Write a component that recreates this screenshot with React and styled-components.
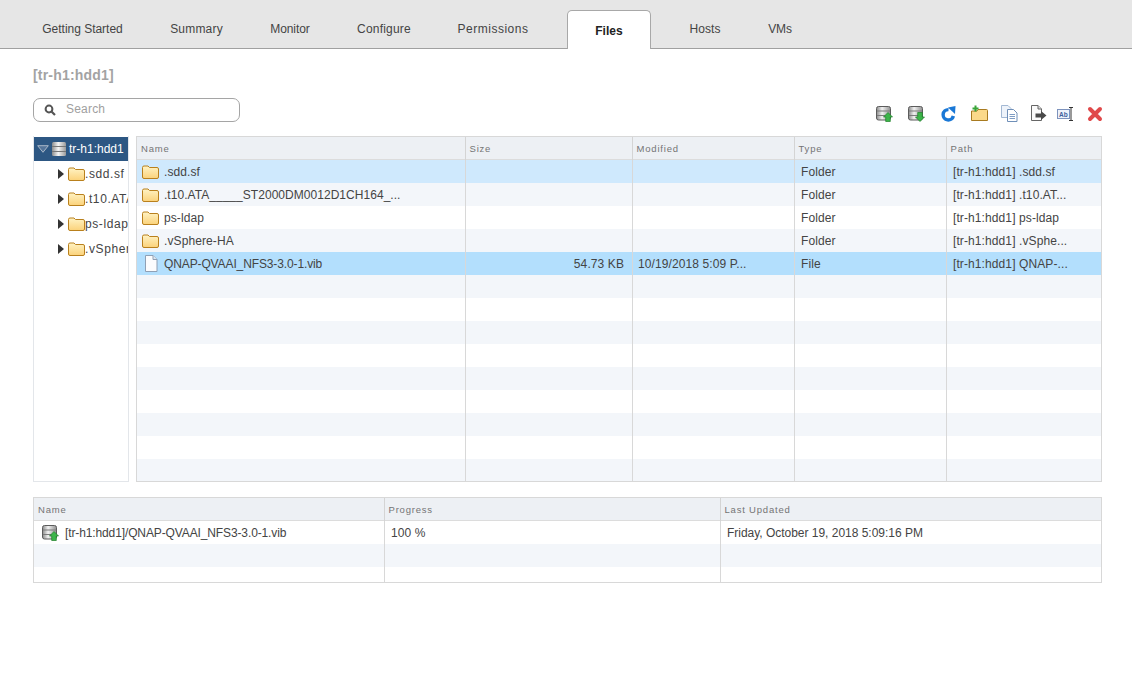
import styled, { createGlobalStyle } from 'styled-components'

const GlobalStyle = createGlobalStyle`
  html, body {
    margin: 0;
    padding: 0;
    background: #fff;
    font-family: 'Liberation Sans', Arial, sans-serif;
  }
`

const TabBar = styled.div`
  display: flex;
  align-items: flex-end;
  height: 48px;
  padding-left: 18.5px;
  background: #e6e6e6;
  border-bottom: 1px solid #a0a0a0;
`

const Tab = styled.div`
  box-sizing: border-box;
  flex: none;
  width: ${(p) => p.$w}px;
  height: 38px;
  padding-top: 12px;
  text-align: center;
  font-size: 12px;
  line-height: 14px;
  letter-spacing: ${(p) => p.$ls || 0.07}px;
  color: #444;
`

const ActiveTab = styled(Tab)`
  height: 39px;
  margin: 0 14.5px -1px 15.5px;
  padding-top: 13px;
  font-weight: bold;
  color: #222;
  background: #fff;
  border: 1px solid #a8a8a8;
  border-bottom: none;
  border-radius: 5px 5px 0 0;
`

const Content = styled.div`
  padding: 18px 30px 0 33px;
`

const Title = styled.h1`
  margin: 0;
  font-size: 14px;
  line-height: 17px;
  font-weight: bold;
  letter-spacing: 0.2px;
  color: #a3a3a3;
`

const Toolbar = styled.div`
  display: flex;
  justify-content: space-between;
  align-items: flex-start;
  height: 38px;
  margin-top: 14px;
`

const SearchBox = styled.div`
  box-sizing: border-box;
  display: flex;
  align-items: center;
  gap: 10px;
  width: 207px;
  height: 24px;
  padding: 0 0 2px 10px;
  border: 1px solid #a5a5a5;
  border-radius: 7px;
  font-size: 12px;
  letter-spacing: 0.2px;
  color: #a0a0a0;
`

const Actions = styled.div`
  display: flex;
  margin: 7px -1px 0 0;
`

const IconSlot = styled.span`
  display: block;
  width: 17px;
  height: 17px;
  flex: none;
  margin-left: ${(p) => p.$gap}px;
`

const Browser = styled.div`
  display: flex;
  gap: 7px;
`

const Tree = styled.div`
  box-sizing: border-box;
  width: 96px;
  height: 346px;
  flex: none;
  overflow: hidden;
  border: 1px solid #e3e6ea;
  border-top: none;
`

const TreeRoot = styled.div`
  display: flex;
  align-items: center;
  height: 24px;
  margin: 1px -1px 0 -1px;
  padding-left: 4px;
  background: #2d5783;
  color: #fff;
  font-size: 12px;
  white-space: nowrap;
  svg {
    flex: none;
    margin-right: 3px;
  }
`

const TreeItem = styled.div`
  display: flex;
  align-items: center;
  height: 25px;
  padding-left: 24px;
  font-size: 12px;
  letter-spacing: 0.6px;
  color: #444;
  white-space: nowrap;
  svg {
    flex: none;
  }
`

const Table = styled.div`
  box-sizing: border-box;
  flex: 1;
  height: ${(p) => p.$h}px;
  overflow: hidden;
  border: 1px solid #d8d8d8;
`

const HeadRow = styled.div`
  display: grid;
  grid-template-columns: ${(p) => p.$cols};
  height: 23px;
  box-sizing: border-box;
  background: #edf0f4;
  border-bottom: 1px solid #dcdcdc;
`

const HeadCell = styled.div`
  padding-left: 3.5px;
  font-size: 9.5px;
  line-height: 23px;
  letter-spacing: 0.8px;
  color: #747474;
  border-left: 1px solid #d4d4d4;
  &:first-child {
    padding-left: 4px;
    border-left: none;
  }
`

const rowColor = { selected: '#b3dffd', light: '#cfe9fd' }

const Row = styled.div`
  display: grid;
  grid-template-columns: ${(p) => p.$cols};
  height: 23px;
  background: ${(p) => rowColor[p.$state] || (p.$odd ? '#f3f6fa' : '#fff')};
`

const Cell = styled.div`
  display: flex;
  align-items: center;
  justify-content: ${(p) => (p.$right ? 'flex-end' : 'flex-start')};
  gap: ${(p) => p.$gap || 5}px;
  min-width: 0;
  padding: 0 ${(p) => (p.$right ? 8 : 0)}px 0 ${(p) => p.$pad || 6}px;
  font-size: 12px;
  letter-spacing: ${(p) => p.$ls || 0.1}px;
  color: #444;
  white-space: nowrap;
  overflow: hidden;
  border-left: 1px solid #d8d8d8;
  &:first-child {
    border-left: none;
  }
`

const UploadsWrap = styled.div`
  margin-top: 15px;
`

const Triangle = styled.span`
  flex: none;
  width: 0;
  height: 0;
  margin-right: 4px;
  border-top: 5px solid transparent;
  border-bottom: 5px solid transparent;
  border-left: 6px solid #333;
`

const GraphicSlot = styled.span`
  display: flex;
  justify-content: center;
  flex: none;
  width: 17px;
`

const Folder = () => (
  <svg width="17" height="14" viewBox="0 0 17 14">
    <defs>
      <linearGradient id="fold" x1="0" y1="0" x2="0" y2="1">
        <stop offset="0" stopColor="#fff3c4" />
        <stop offset="1" stopColor="#fbd27a" />
      </linearGradient>
    </defs>
    <path d="M.5 2.5 Q.5 1 2 1 H6 L7.5 2.5 H15 Q16.5 2.5 16.5 4 V12 Q16.5 13.5 15 13.5 H2 Q.5 13.5 .5 12 Z" fill="url(#fold)" stroke="#b9801d" />
  </svg>
)

const FileIcon = () => (
  <svg width="14" height="17" viewBox="0 0 14 17">
    <path d="M1.5 .5 H9 L13 4.5 V16.5 H1.5 Z" fill="#fbfcfe" stroke="#8fa0b5" />
    <path d="M9 .5 V4.5 H13" fill="#dfe7f0" stroke="#8fa0b5" />
  </svg>
)

const Drum = () => (
  <>
    <defs>
      <linearGradient id="drum" x1="0" y1="0" x2="1" y2="0">
        <stop offset="0" stopColor="#8a8a8a" />
        <stop offset=".4" stopColor="#f2f2f2" />
        <stop offset="1" stopColor="#8f8f8f" />
      </linearGradient>
    </defs>
    <rect x=".5" y="1.5" width="14" height="13.5" rx="2" fill="url(#drum)" stroke="#5c5c5c" />
    <path d="M1 6 H14 M1 10.5 H14" stroke="#7b7b7b" />
  </>
)

const UploadIcon = () => (
  <svg width="17" height="17" viewBox="0 0 17 17">
    <Drum />
    <path d="M12 7.5 L16.5 12 H14.3 V16.5 H9.7 V12 H7.5 Z" fill="#3cb54a" stroke="#1f8029" strokeWidth=".7" />
  </svg>
)

const DownloadIcon = () => (
  <svg width="17" height="17" viewBox="0 0 17 17">
    <Drum />
    <path d="M12 16.5 L16.5 12 H14.3 V7.5 H9.7 V12 H7.5 Z" fill="#3cb54a" stroke="#1f8029" strokeWidth=".7" />
  </svg>
)

const RefreshIcon = () => (
  <svg width="17" height="17" viewBox="0 0 17 17">
    <path d="M13.4 11 A5.2 5.2 0 1 1 8.5 4.6" fill="none" stroke="#1a78d6" strokeWidth="3.4" />
    <path d="M8 2.5 L15.5 1 L15 9 Z" fill="#1a78d6" />
  </svg>
)

const NewFolderIcon = () => (
  <svg width="17" height="17" viewBox="0 0 17 17">
    <path d="M.5 6 H6 L7 4.5 H15.5 Q16.5 4.5 16.5 5.5 V15.5 H.5 Z" fill="#fbd98a" stroke="#a87a20" />
    <path d="M4.5 .5 V6.5 M1.5 3.5 H7.5" stroke="#39a539" strokeWidth="2" />
  </svg>
)

const CopyIcon = () => (
  <svg width="17" height="17" viewBox="0 0 17 17">
    <path d="M.5 .5 H7 L10 3.5 V12.5 H.5 Z" fill="#eef3fa" stroke="#a3b8d3" />
    <path d="M6.5 4.5 H12.5 L16 8 V16.5 H6.5 Z" fill="#fff" stroke="#6f8fb8" />
    <path d="M8.5 9.5 H14 M8.5 11.5 H14 M8.5 13.5 H14" stroke="#7f9dc4" />
  </svg>
)

const MoveIcon = () => (
  <svg width="17" height="17" viewBox="0 0 17 17">
    <path d="M1.5 .5 H8 L11.5 4 V15.5 H1.5 Z" fill="#fafafa" stroke="#666" />
    <path d="M8 .5 V4 H11.5" fill="#ddd" stroke="#666" />
    <path d="M5.5 8.5 H11 V6 L16.5 10.5 L11 15 V12.5 H5.5 Z" fill="#4a4a4a" />
  </svg>
)

const RenameIcon = () => (
  <svg width="17" height="17" viewBox="0 0 17 17">
    <rect x=".5" y="4.5" width="12" height="9" fill="#eef2fa" stroke="#7d93bd" />
    <text x="2" y="11.5" fontSize="6.5" fontWeight="bold" fontFamily="Liberation Sans" fill="#3d5f9c">Ab</text>
    <path d="M12 2.5 H16 M14 2.5 V15.5 M12 15.5 H16" stroke="#333" fill="none" />
  </svg>
)

const CloseIcon = () => (
  <svg width="17" height="17" viewBox="0 0 17 17">
    <path d="M4 4 L14 14 M14 4 L4 14" stroke="#e0494a" strokeWidth="4" strokeLinecap="round" />
  </svg>
)

const SearchIcon = () => (
  <svg width="12" height="12" viewBox="0 0 12 12" style={{ flex: 'none', marginTop: 2 }}>
    <circle cx="5" cy="5" r="3.4" fill="none" stroke="#555" strokeWidth="2" />
    <path d="M7.5 7.5 L11 11" stroke="#555" strokeWidth="2.2" />
  </svg>
)

const tabs = [
  { label: 'Getting Started', w: 128, ls: -0.02 },
  { label: 'Summary', w: 100, ls: 0.2 },
  { label: 'Monitor', w: 87, ls: -0.1 },
  { label: 'Configure', w: 101, ls: 0.2 },
  { label: 'Permissions', w: 117, ls: 0.5 },
  { label: 'Files', w: 84, active: true },
  { label: 'Hosts', w: 79 },
  { label: 'VMs', w: 71, ls: -0.1 },
]

const actions = [
  [UploadIcon, 0],
  [DownloadIcon, 15],
  [RefreshIcon, 15],
  [NewFolderIcon, 14],
  [CopyIcon, 13],
  [MoveIcon, 12],
  [RenameIcon, 10],
  [CloseIcon, 12],
]

const fileCols = '328px 167px 162px 152px 1fr'
const uploadCols = '350px 336px 1fr'

const files = [
  { name: '.sdd.sf', type: 'Folder', path: '[tr-h1:hdd1] .sdd.sf', state: 'light' },
  { name: '.t10.ATA_____ST2000DM0012D1CH164_...', type: 'Folder', path: '[tr-h1:hdd1] .t10.AT...', ls: 0.04 },
  { name: 'ps-ldap', type: 'Folder', path: '[tr-h1:hdd1] ps-ldap' },
  { name: '.vSphere-HA', type: 'Folder', path: '[tr-h1:hdd1] .vSphe...' },
  {
    name: 'QNAP-QVAAI_NFS3-3.0-1.vib',
    size: '54.73 KB',
    modified: '10/19/2018 5:09 P...',
    type: 'File',
    path: '[tr-h1:hdd1] QNAP-...',
    state: 'selected',
    ls: -0.12,
  },
]

const rows = [...files, ...Array(9).fill({})]

export default function App() {
  return (
    <>
      <GlobalStyle />
      <TabBar>
        {tabs.map((t) => {
          const Item = t.active ? ActiveTab : Tab
          return (
            <Item key={t.label} $w={t.w} $ls={t.ls}>
              {t.label}
            </Item>
          )
        })}
      </TabBar>
      <Content>
        <Title>[tr-h1:hdd1]</Title>
        <Toolbar>
          <SearchBox>
            <SearchIcon />
            Search
          </SearchBox>
          <Actions>
            {actions.map(([Icon, gap], i) => (
              <IconSlot key={i} $gap={gap}>
                <Icon />
              </IconSlot>
            ))}
          </Actions>
        </Toolbar>
        <Browser>
          <Tree>
            <TreeRoot>
              <svg width="12" height="8" viewBox="0 0 12 8">
                <path d="M.7 .7 H11.3 L6 7.3 Z" fill="#54749a" stroke="#a9b8c8" />
              </svg>
              <svg width="14" height="14" viewBox="0 0 14 14">
                <defs>
                  <linearGradient id="rootDrum" x1="0" y1="0" x2="1" y2="0">
                    <stop offset="0" stopColor="#8d8d8d" />
                    <stop offset=".45" stopColor="#f4f4f4" />
                    <stop offset="1" stopColor="#9a9a9a" />
                  </linearGradient>
                </defs>
                <rect width="14" height="14" rx="1.5" fill="url(#rootDrum)" />
                <path d="M0 4.5 H14 M0 9.5 H14" stroke="#777" />
              </svg>
              tr-h1:hdd1
            </TreeRoot>
            {['.sdd.sf', '.t10.ATA', 'ps-ldap', '.vSphere'].map((n) => (
              <TreeItem key={n}>
                <Triangle />
                <Folder />
                {n}
              </TreeItem>
            ))}
          </Tree>
          <Table $h={346}>
            <HeadRow $cols={fileCols}>
              {['Name', 'Size', 'Modified', 'Type', 'Path'].map((h) => (
                <HeadCell key={h}>{h}</HeadCell>
              ))}
            </HeadRow>
            {rows.map((r, i) => (
              <Row key={i} $cols={fileCols} $state={r.state} $odd={i % 2 === 1}>
                <Cell $pad={5} $gap={5} $ls={r.ls}>
                  {r.type && (
                    <GraphicSlot>{r.type === 'Folder' ? <Folder /> : <FileIcon />}</GraphicSlot>
                  )}
                  {r.name}
                </Cell>
                <Cell $right>{r.size}</Cell>
                <Cell $pad={5}>{r.modified}</Cell>
                <Cell>{r.type}</Cell>
                <Cell>{r.path}</Cell>
              </Row>
            ))}
          </Table>
        </Browser>
        <UploadsWrap>
          <Table $h={86}>
            <HeadRow $cols={uploadCols}>
              {['Name', 'Progress', 'Last Updated'].map((h) => (
                <HeadCell key={h}>{h}</HeadCell>
              ))}
            </HeadRow>
            <Row $cols={uploadCols}>
              <Cell $pad={8} $gap={6} $ls={-0.12}>
                <UploadIcon />
                [tr-h1:hdd1]/QNAP-QVAAI_NFS3-3.0-1.vib
              </Cell>
              <Cell>100 %</Cell>
              <Cell $ls={-0.02}>Friday, October 19, 2018 5:09:16 PM</Cell>
            </Row>
            <Row $cols={uploadCols} $odd>
              <Cell />
              <Cell />
              <Cell />
            </Row>
            <Row $cols={uploadCols}>
              <Cell />
              <Cell />
              <Cell />
            </Row>
          </Table>
        </UploadsWrap>
      </Content>
    </>
  )
}
